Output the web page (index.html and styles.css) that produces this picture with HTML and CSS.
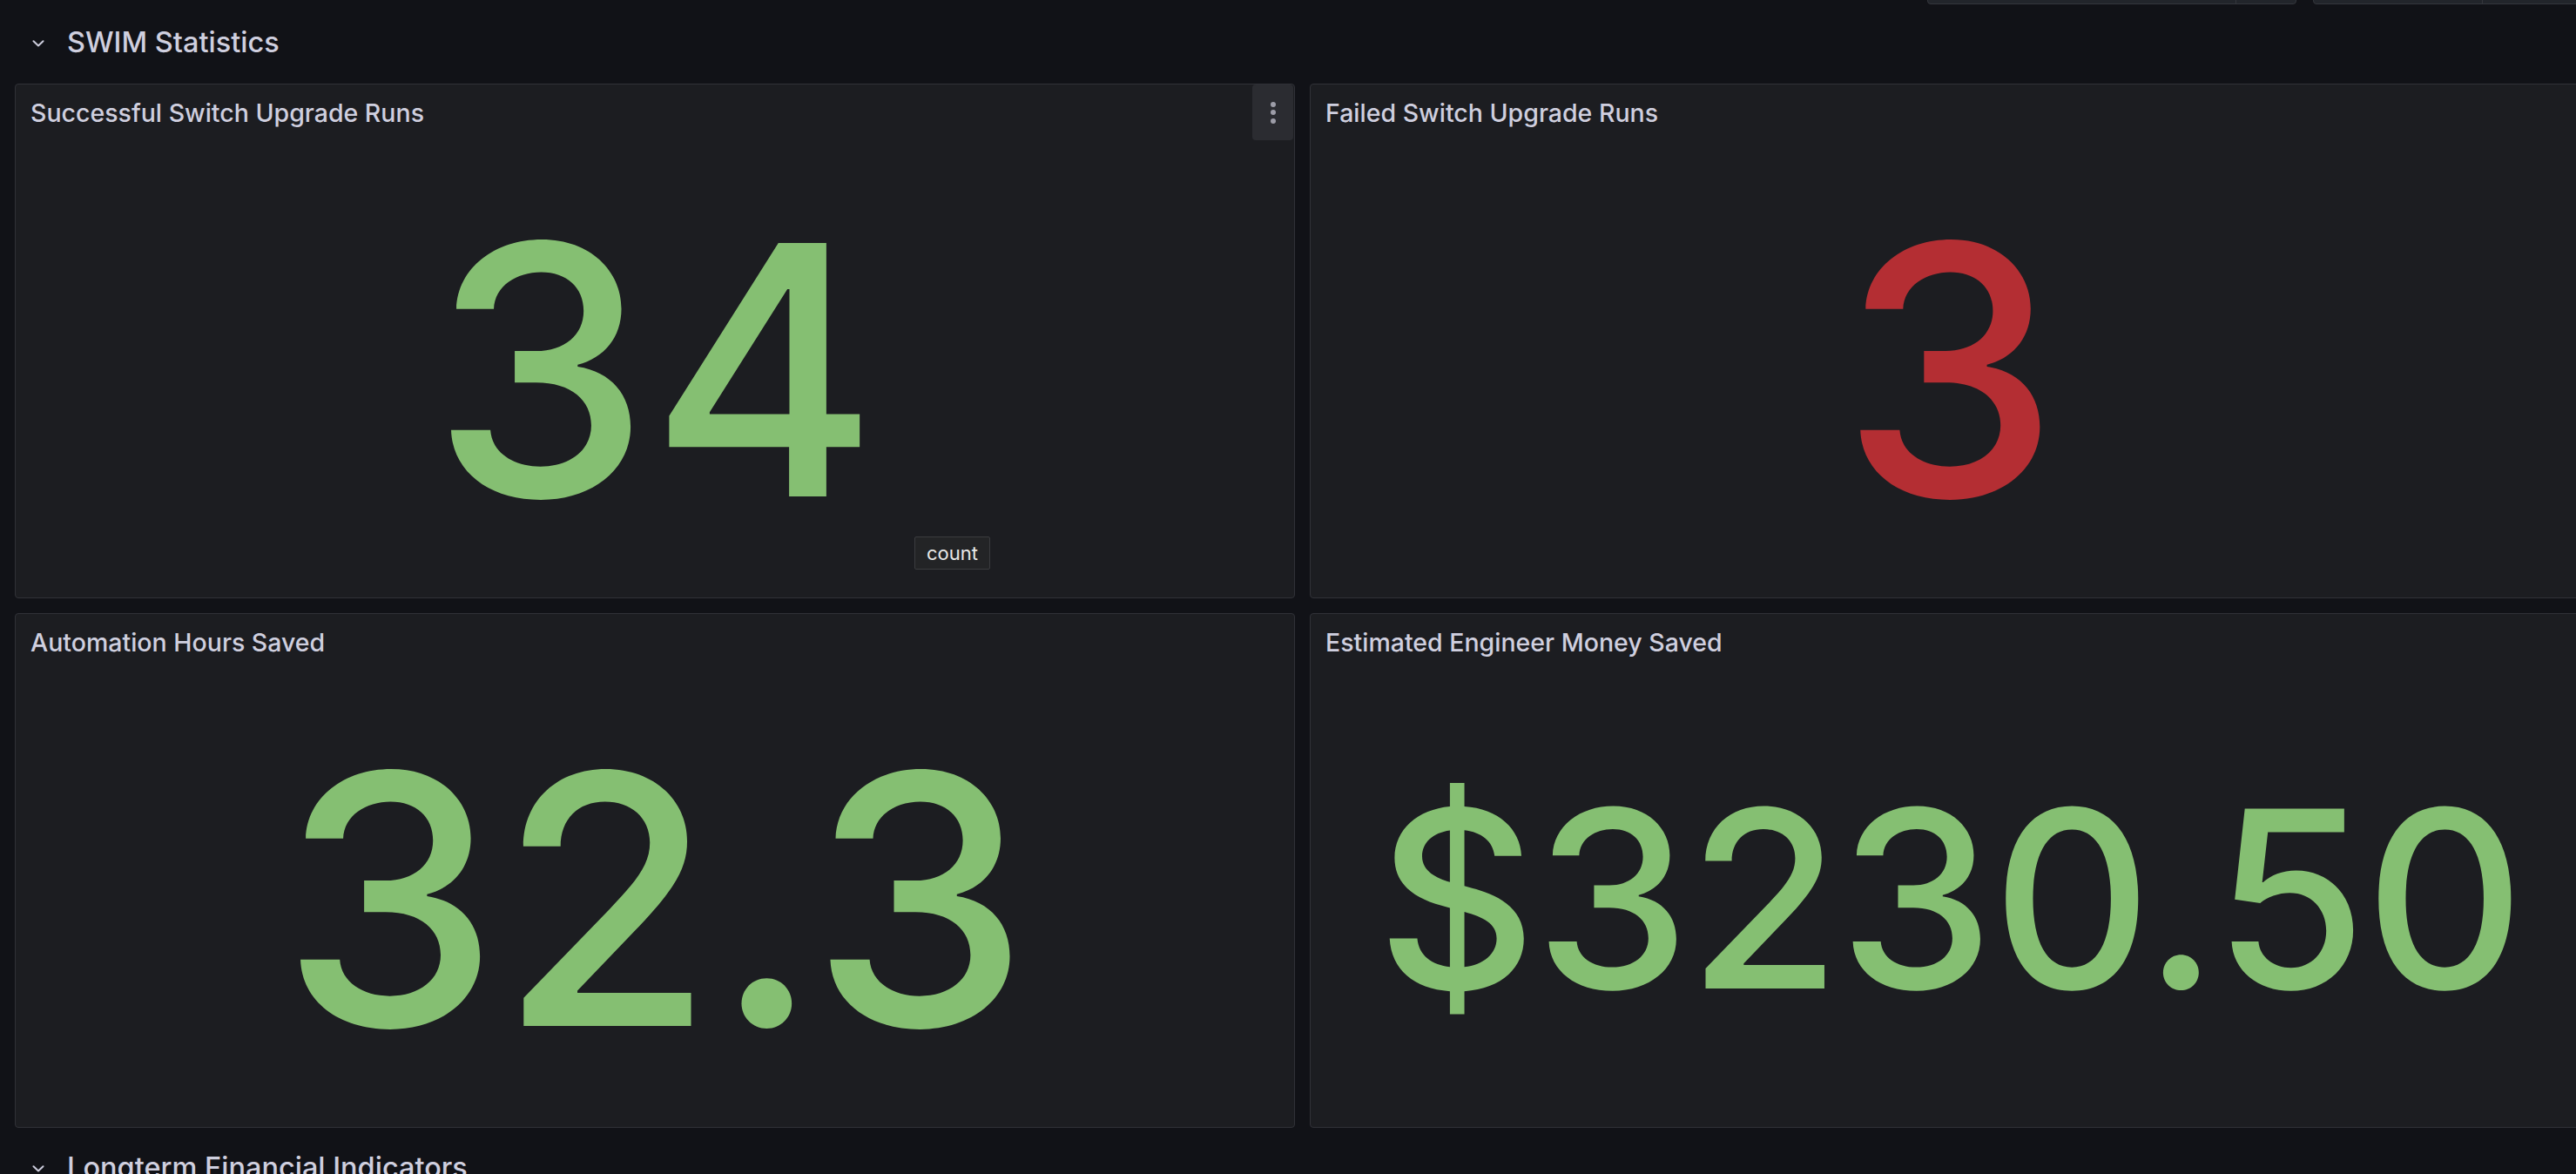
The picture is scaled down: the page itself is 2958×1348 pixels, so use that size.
FILE: index.html
```html
<!DOCTYPE html>
<html lang="en">
<head>
<meta charset="utf-8">
<title>SWIM Statistics</title>
<link rel="stylesheet" href="styles.css">
</head>
<body>
<div class="controls">
  <div class="picker picker-a"><span class="picker-main"></span><span class="picker-side"></span></div>
  <div class="picker picker-b"><span class="picker-main"></span><span class="picker-side"></span></div>
</div>
<main class="dashboard">
  <div class="row-header">
    <svg class="chevron" width="14" height="8" viewBox="0 0 14 8"><path d="M1.5 1.2 L7 6.5 L12.5 1.2" fill="none" stroke="#ccccdc" stroke-width="2" stroke-linecap="round" stroke-linejoin="round"/></svg>
    <span class="row-title">SWIM Statistics</span>
  </div>

  <section class="panel">
    <header class="panel-header">
      <h2 class="panel-title">Successful Switch Upgrade Runs</h2>
      <button class="panel-menu" aria-label="Menu"><span></span><span></span><span></span></button>
    </header>
    <div class="panel-body"><span class="stat green">34</span></div>
    <div class="tooltip">count</div>
  </section>

  <section class="panel">
    <header class="panel-header">
      <h2 class="panel-title">Failed Switch Upgrade Runs</h2>
    </header>
    <div class="panel-body"><span class="stat red">3</span></div>
  </section>

  <section class="panel">
    <header class="panel-header">
      <h2 class="panel-title">Automation Hours Saved</h2>
    </header>
    <div class="panel-body"><span class="stat green">32.3</span></div>
  </section>

  <section class="panel">
    <header class="panel-header">
      <h2 class="panel-title">Estimated Engineer Money Saved</h2>
    </header>
    <div class="panel-body"><span class="stat green small">$3230.50</span></div>
  </section>

  <div class="row-header">
    <svg class="chevron" width="14" height="8" viewBox="0 0 14 8"><path d="M1.5 1.2 L7 6.5 L12.5 1.2" fill="none" stroke="#ccccdc" stroke-width="2" stroke-linecap="round" stroke-linejoin="round"/></svg>
    <span class="row-title">Longterm Financial Indicators</span>
  </div>
</main>
</body>
</html>
```

FILE: styles.css
```css
html, body {
  margin: 0;
  padding: 0;
  background: #111217;
  overflow: hidden;
  width: 2958px;
  height: 1348px;
}

body {
  font-family: Inter, "Noto Sans", sans-serif;
  color: #ccccdc;
}

.controls {
  width: 2974px;
  height: 5px;
  display: flex;
  justify-content: flex-end;
  align-items: flex-end;
  gap: 19px;
}

.picker {
  flex: none;
  height: 40px;
  display: flex;
  background: #22252b;
  border: 1px solid #34363c;
  border-radius: 4px;
  box-sizing: border-box;
}

.picker-a { width: 424px; }
.picker-b { width: 318px; }

.picker-main { flex: 1; }
.picker-side {
  border-left: 1px solid #34363c;
}
.picker-a .picker-side { width: 68px; }
.picker-b .picker-main { flex: none; width: 193px; }
.picker-b .picker-side { flex: 1; }

.dashboard {
  display: grid;
  grid-template-columns: 1470px 1470px;
  grid-template-rows: 59px 591px 591px 59px;
  column-gap: 17px;
  row-gap: 17px;
  padding-left: 17px;
  margin-top: 15px;
}

.row-header {
  grid-column: 1 / -1;
  display: flex;
  align-items: center;
  padding-left: 20px;
}

.chevron {
  flex: none;
  margin-right: 26px;
}

.row-title {
  font-size: 32.5px;
  font-weight: 500;
  color: #cfcfdf;
  line-height: 1;
}

.panel {
  position: relative;
  display: flex;
  flex-direction: column;
  background: #1c1d21;
  border: 1px solid #303137;
  border-radius: 4px;
  box-sizing: border-box;
  min-width: 0;
}

.panel-header {
  height: 64px;
  flex: none;
  display: flex;
  align-items: flex-start;
}

.panel-title {
  margin: 0;
  padding: 13px 0 0 17px;
  font-size: 28.5px;
  font-weight: 500;
  line-height: 40px;
  color: #cfcfdf;
  flex: 1;
}

.panel-menu {
  flex: none;
  width: 47px;
  height: 64px;
  margin-right: 1px;
  padding: 0;
  border: none;
  border-radius: 4px;
  background: #2b2c31;
  display: flex;
  flex-direction: column;
  align-items: center;
  justify-content: center;
  gap: 3.5px;
}

.panel-menu span {
  display: block;
  width: 6px;
  height: 6px;
  border-radius: 50%;
  background: #9d9da8;
}

.panel-body {
  flex: 1;
  display: flex;
  align-items: center;
  justify-content: center;
  min-height: 0;
}

.stat {
  font-size: 400px;
  font-weight: 500;
  line-height: 1;
  letter-spacing: 0;
  white-space: nowrap;
}

.stat.small {
  font-size: 284px;
  letter-spacing: -2px;
}

.green { color: #85bf72; }
.red { color: #b42e33; }

.tooltip {
  position: absolute;
  left: 1032px;
  top: 519px;
  height: 38px;
  padding: 0 13px;
  display: flex;
  align-items: center;
  background: #232426;
  border: 1px solid #3b3c3f;
  border-radius: 2px;
  box-sizing: border-box;
  font-size: 22px;
  color: #e8e8e8;
}
```
